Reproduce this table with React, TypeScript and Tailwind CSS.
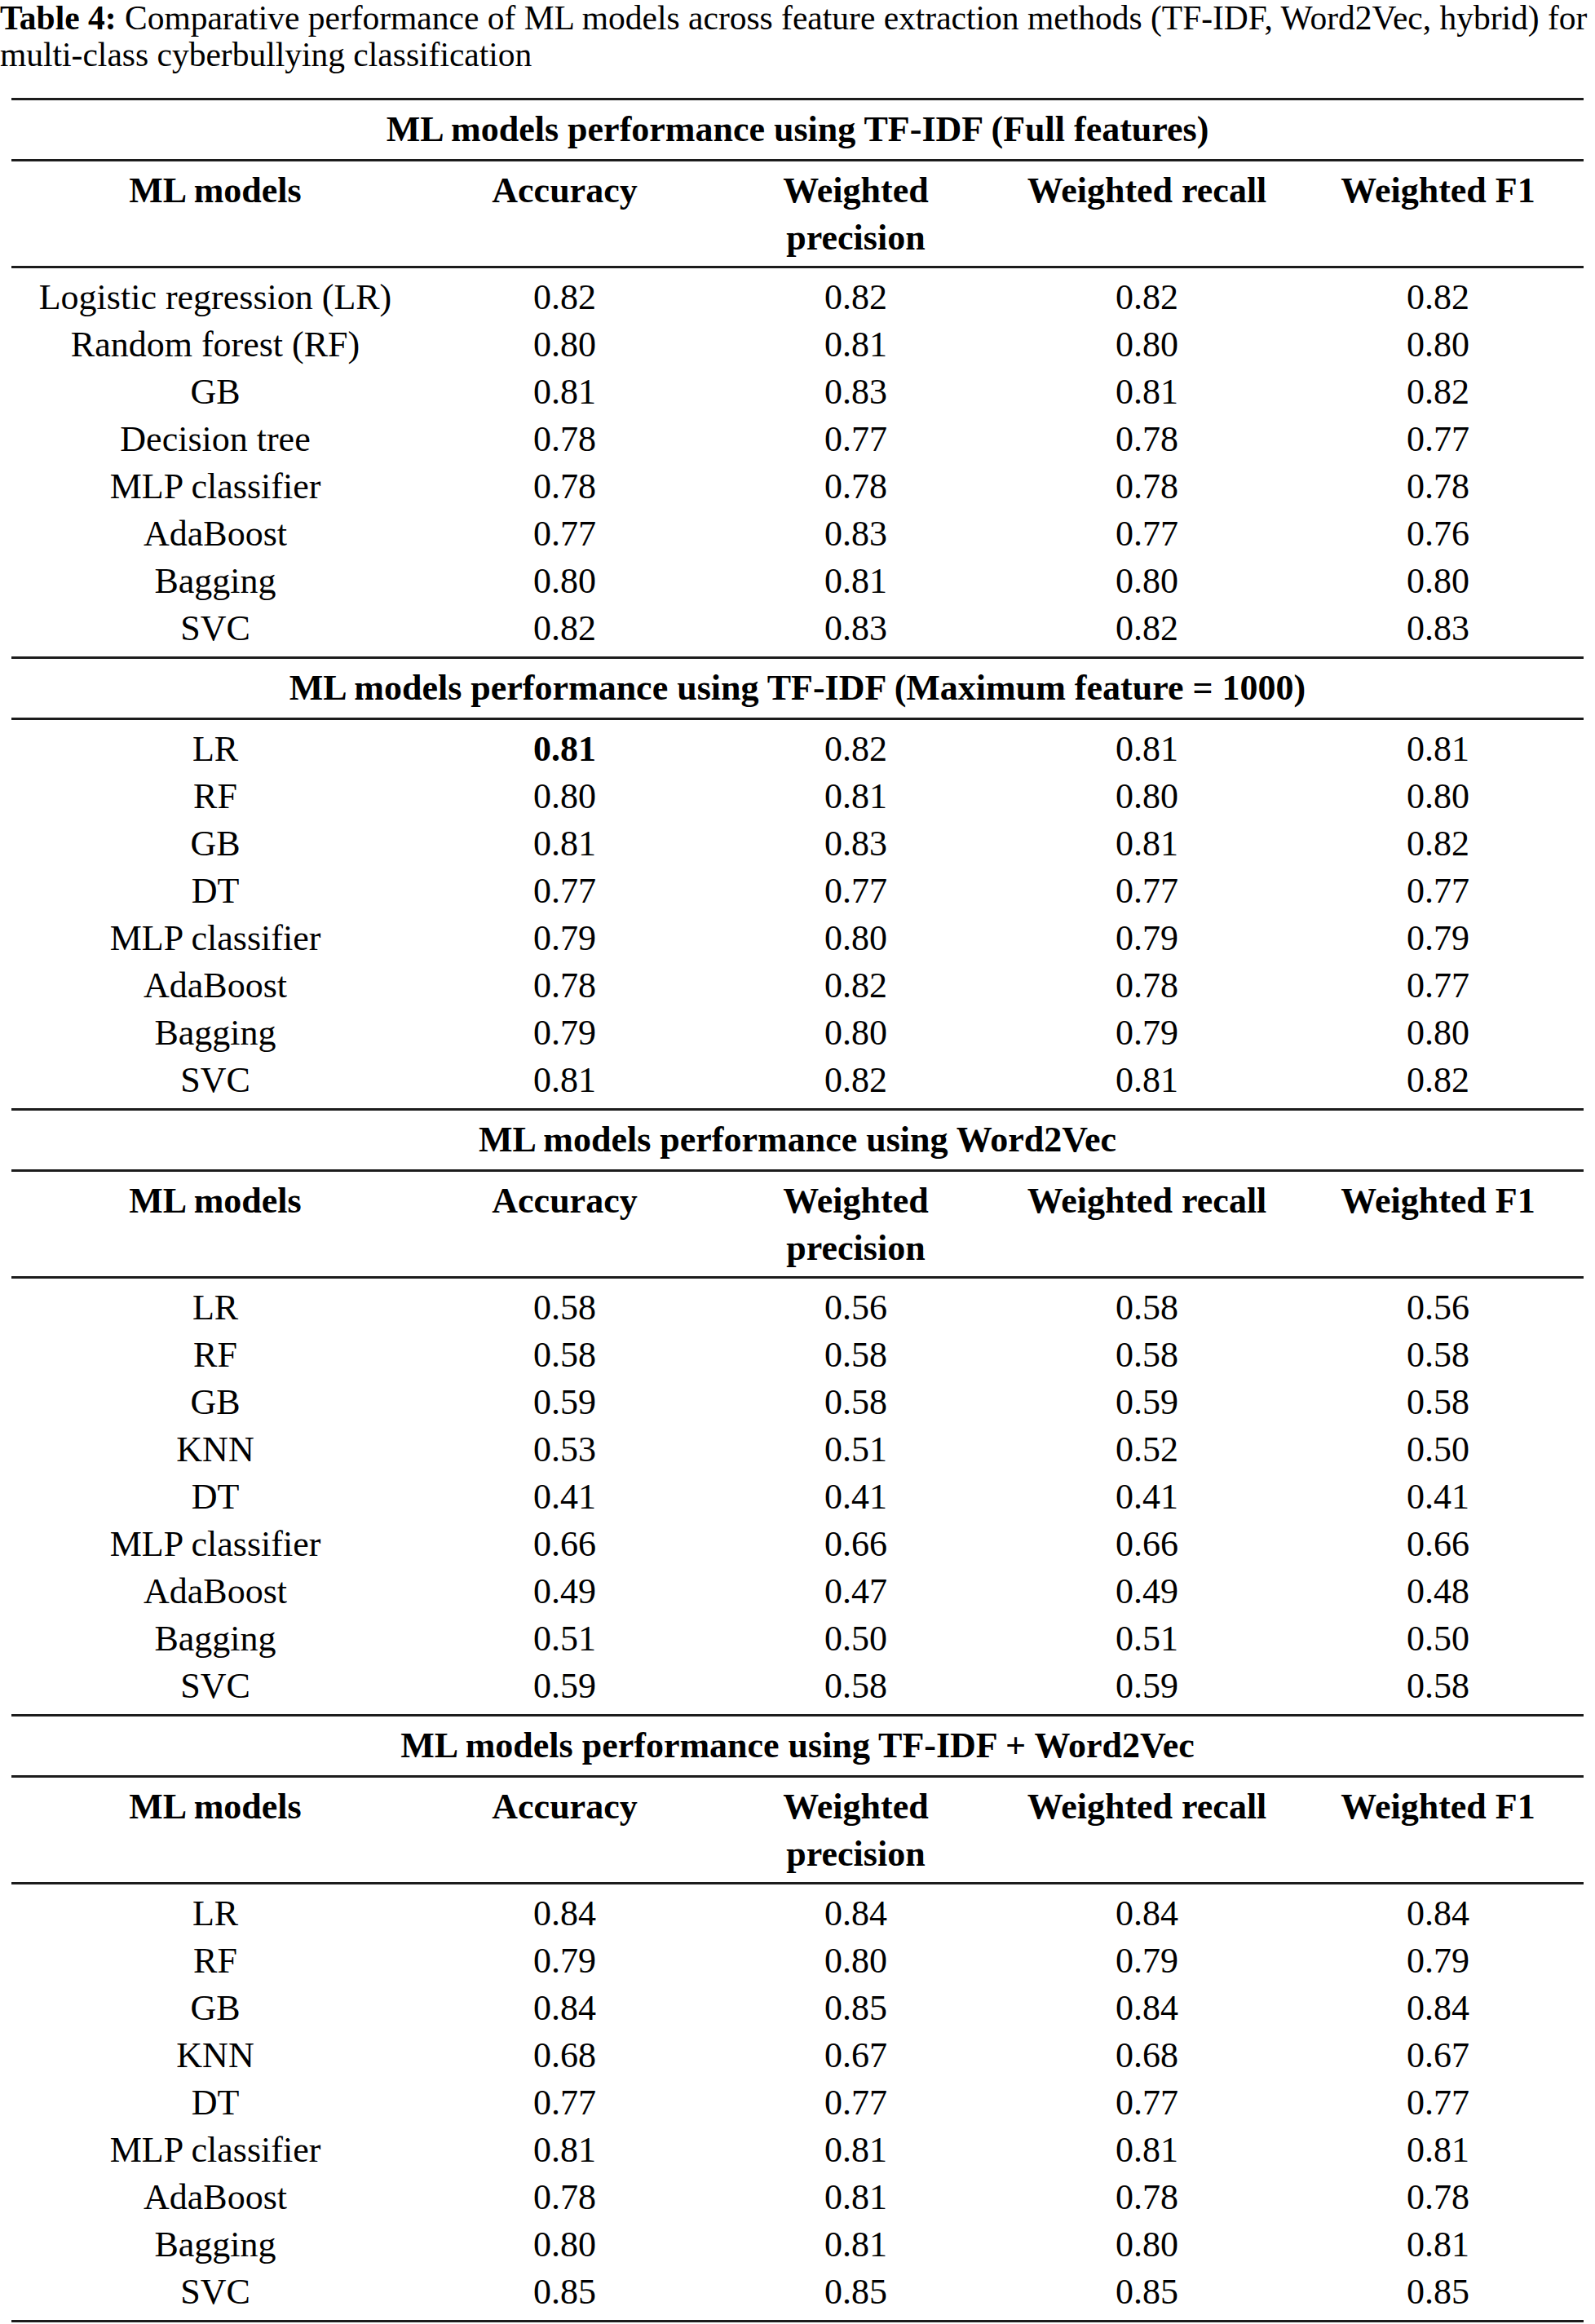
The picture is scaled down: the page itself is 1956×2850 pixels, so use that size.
import React from 'react';

type Row = { name: string; vals: string[]; bold?: number };

const SECTIONS: { title: string; header: boolean; rows: Row[] }[] = [
  {
    title: 'ML models performance using TF-IDF (Full features)',
    header: true,
    rows: [
      { name: 'Logistic regression (LR)', vals: ['0.82', '0.82', '0.82', '0.82'] },
      { name: 'Random forest (RF)', vals: ['0.80', '0.81', '0.80', '0.80'] },
      { name: 'GB', vals: ['0.81', '0.83', '0.81', '0.82'] },
      { name: 'Decision tree', vals: ['0.78', '0.77', '0.78', '0.77'] },
      { name: 'MLP classifier', vals: ['0.78', '0.78', '0.78', '0.78'] },
      { name: 'AdaBoost', vals: ['0.77', '0.83', '0.77', '0.76'] },
      { name: 'Bagging', vals: ['0.80', '0.81', '0.80', '0.80'] },
      { name: 'SVC', vals: ['0.82', '0.83', '0.82', '0.83'] },
    ],
  },
  {
    title: 'ML models performance using TF-IDF (Maximum feature = 1000)',
    header: false,
    rows: [
      { name: 'LR', vals: ['0.81', '0.82', '0.81', '0.81'], bold: 0 },
      { name: 'RF', vals: ['0.80', '0.81', '0.80', '0.80'] },
      { name: 'GB', vals: ['0.81', '0.83', '0.81', '0.82'] },
      { name: 'DT', vals: ['0.77', '0.77', '0.77', '0.77'] },
      { name: 'MLP classifier', vals: ['0.79', '0.80', '0.79', '0.79'] },
      { name: 'AdaBoost', vals: ['0.78', '0.82', '0.78', '0.77'] },
      { name: 'Bagging', vals: ['0.79', '0.80', '0.79', '0.80'] },
      { name: 'SVC', vals: ['0.81', '0.82', '0.81', '0.82'] },
    ],
  },
  {
    title: 'ML models performance using Word2Vec',
    header: true,
    rows: [
      { name: 'LR', vals: ['0.58', '0.56', '0.58', '0.56'] },
      { name: 'RF', vals: ['0.58', '0.58', '0.58', '0.58'] },
      { name: 'GB', vals: ['0.59', '0.58', '0.59', '0.58'] },
      { name: 'KNN', vals: ['0.53', '0.51', '0.52', '0.50'] },
      { name: 'DT', vals: ['0.41', '0.41', '0.41', '0.41'] },
      { name: 'MLP classifier', vals: ['0.66', '0.66', '0.66', '0.66'] },
      { name: 'AdaBoost', vals: ['0.49', '0.47', '0.49', '0.48'] },
      { name: 'Bagging', vals: ['0.51', '0.50', '0.51', '0.50'] },
      { name: 'SVC', vals: ['0.59', '0.58', '0.59', '0.58'] },
    ],
  },
  {
    title: 'ML models performance using TF-IDF + Word2Vec',
    header: true,
    rows: [
      { name: 'LR', vals: ['0.84', '0.84', '0.84', '0.84'] },
      { name: 'RF', vals: ['0.79', '0.80', '0.79', '0.79'] },
      { name: 'GB', vals: ['0.84', '0.85', '0.84', '0.84'] },
      { name: 'KNN', vals: ['0.68', '0.67', '0.68', '0.67'] },
      { name: 'DT', vals: ['0.77', '0.77', '0.77', '0.77'] },
      { name: 'MLP classifier', vals: ['0.81', '0.81', '0.81', '0.81'] },
      { name: 'AdaBoost', vals: ['0.78', '0.81', '0.78', '0.78'] },
      { name: 'Bagging', vals: ['0.80', '0.81', '0.80', '0.81'] },
      { name: 'SVC', vals: ['0.85', '0.85', '0.85', '0.85'] },
    ],
  },
];

const COLS = 'grid grid-cols-[500px_357px_357px_357px_357px] text-center';

function Rule() {
  return <div className="h-[3px] bg-[#1c1c1c]" />;
}

function HeaderRow() {
  return (
    <div className={`${COLS} font-bold pt-[7px] pb-[5px] leading-[58px]`}>
      <div>ML models</div>
      <div>Accuracy</div>
      <div>
        Weighted
        <br />
        precision
      </div>
      <div>Weighted recall</div>
      <div>Weighted F1</div>
    </div>
  );
}

export default function App() {
  return (
    <div className="w-[1956px] h-[2850px] bg-white text-black font-['Liberation_Serif',_'Times_New_Roman',_serif] overflow-hidden">
      {/* caption */}
      <p className="text-[41.5px] leading-[45px] whitespace-nowrap">
        <span className="font-bold">Table 4:</span> Comparative performance of ML models across feature extraction methods (TF-IDF, Word2Vec, hybrid) for
        <br />
        multi-class cyberbullying classification
      </p>

      <div className="mt-[30px] mx-[14px] text-[44px]">
        {SECTIONS.map((s) => (
          <div key={s.title}>
            <Rule />
            <div className="h-[72px] pt-[7px] leading-[58px] font-bold text-center">{s.title}</div>
            <Rule />
            {s.header && (
              <>
                <HeaderRow />
                <Rule />
              </>
            )}
            <div className="pt-[7px] pb-[5px]">
              {s.rows.map((r, i) => (
                <div key={i} className={`${COLS} leading-[58px]`}>
                  <div>{r.name}</div>
                  {r.vals.map((v, j) => (
                    <div key={j} className={r.bold === j ? 'font-bold' : ''}>
                      {v}
                    </div>
                  ))}
                </div>
              ))}
            </div>
          </div>
        ))}
        <Rule />
      </div>
    </div>
  );
}
